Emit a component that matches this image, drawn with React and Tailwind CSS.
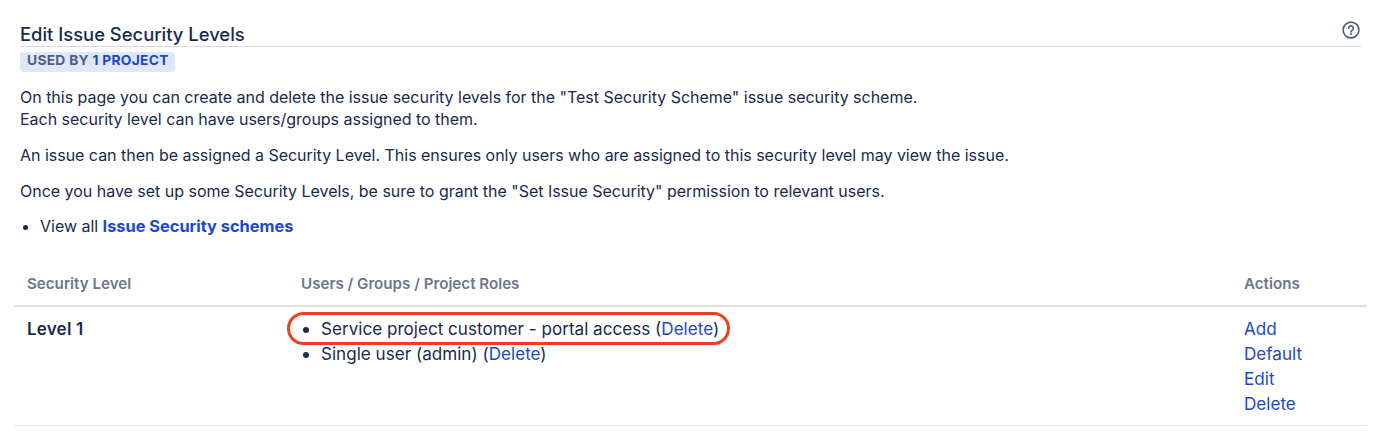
import React from "react";

const Link = ({ children, bold }) => (
  <a className={bold ? "text-[#1d49c7] font-bold text-[16.4px]" : "text-[#1d49c7]"}>{children}</a>
);

export default function App() {
  return (
    <div className="w-[1379px] h-[441px] overflow-hidden bg-white text-[#172b4d] text-[16px] leading-[22px] tracking-[-0.0012em] font-['Inter','Liberation_Sans',sans-serif]">
      <div className="pt-[22px] pl-[20px] pr-[18px]">
        <div className="flex justify-between items-start border-b border-[#d9d9d9] h-[25px]">
          <h1 className="text-[18.4px] leading-[24px] font-medium tracking-normal text-[#172b4d]">Edit Issue Security Levels</h1>
          <svg width="18" height="18" viewBox="0 0 18 18" fill="none" className="-mt-[1px] mr-[1px]">
            <circle cx="9" cy="9" r="7.9" stroke="#505f79" strokeWidth="1.6" />
            <path d="M6.7 7.2a2.3 2.3 0 1 1 3.5 2c-.8.5-1.2.9-1.2 1.7" stroke="#505f79" strokeWidth="1.6" strokeLinecap="round" />
            <circle cx="9" cy="13.1" r="1" fill="#505f79" />
          </svg>
        </div>
        <div className="mt-[5px] inline-flex h-[20px] items-center rounded-[4px] bg-[#dfe7fb] pl-[7px] pr-[6px] pb-[4px] text-[13.8px] font-bold tracking-[0.28px] text-[#505f79] align-top">
          USED BY&nbsp;<span className="text-[#1d49c7]">1 PROJECT</span>
        </div>
        <p className="mt-[14px]">
          On this page you can create and delete the issue security levels for the "Test Security Scheme" issue security scheme.
          <br />
          Each security level can have users/groups assigned to them.
        </p>
        <p className="mt-[14px]">An issue can then be assigned a Security Level. This ensures only users who are assigned to this security level may view the issue.</p>
        <p className="mt-[14px]">Once you have set up some Security Levels, be sure to grant the "Set Issue Security" permission to relevant users.</p>
        <ul className="mt-[13px] list-disc pl-[20px]">
          <li>View all <Link bold>Issue Security schemes</Link></li>
        </ul>
      </div>
      <div className="mt-[35px] ml-[14px] mr-[12px]">
        <div className="flex h-[35px] border-b-2 border-[#dfe1e6] text-[15.15px] font-semibold tracking-normal text-[#6b778c] leading-[24px]">
          <div className="w-[287px] pl-[13px]">Security Level</div>
          <div className="w-[943px]">Users / Groups / Project Roles</div>
          <div>Actions</div>
        </div>
        <div className="flex h-[119px] border-b border-[#dfe1e6] pt-[9px] text-[17.1px] leading-[25px] tracking-normal">
          <div className="w-[287px] pl-[13px] font-semibold tracking-[0.15px]">Level 1</div>
          <ul className="w-[943px] relative list-disc pl-[20px]">
            <li>Service project customer - portal access (<Link>Delete</Link>)</li>
            <li>Single user (admin) (<Link>Delete</Link>)</li>
            <div className="absolute -left-[14px] -top-[4px] h-[33px] w-[443px] rounded-[17px] border-[3px] border-[#e8431f]" />
          </ul>
          <div className="flex flex-col">
            <Link>Add</Link>
            <Link>Default</Link>
            <Link>Edit</Link>
            <Link>Delete</Link>
          </div>
        </div>
      </div>
    </div>
  );
}
